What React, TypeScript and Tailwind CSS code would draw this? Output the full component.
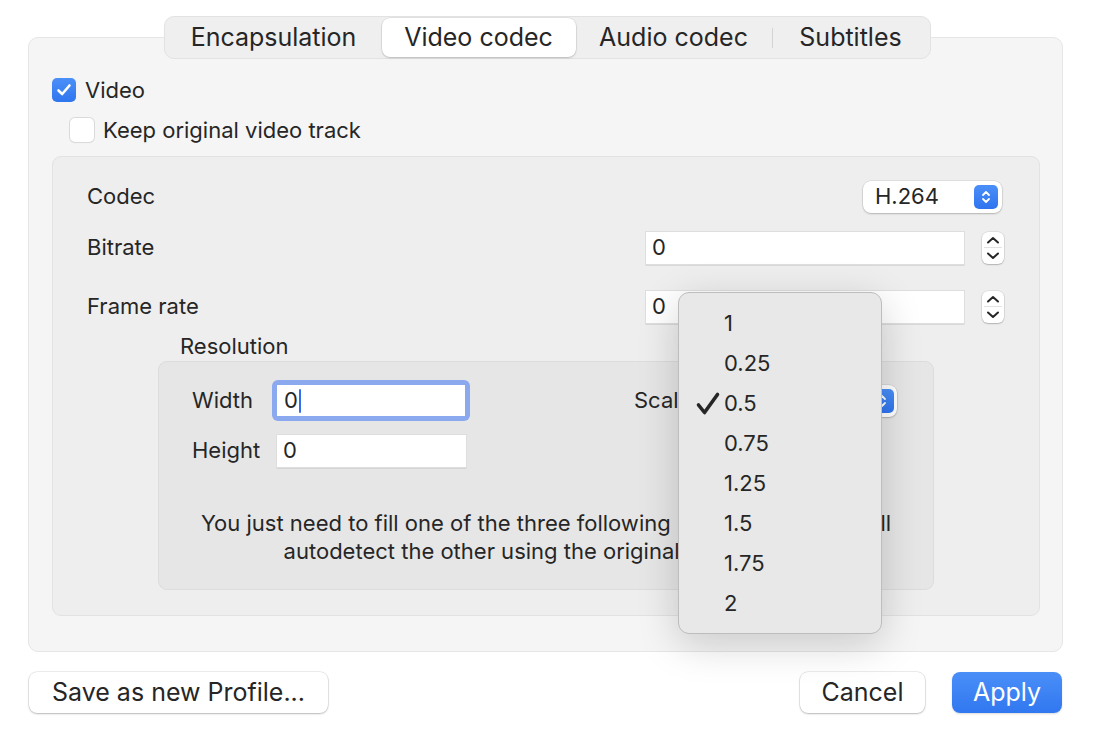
import React from "react";

const font = { fontFamily: "Inter, 'Noto Sans', sans-serif" };

function Stepper() {
  return (
    <div className="flex h-[32px] w-[22px] flex-col items-center justify-between rounded-[6px] bg-white shadow-[0_0_0_0.5px_rgba(0,0,0,0.12),0_1px_1.5px_rgba(0,0,0,0.2)]">
      <svg width="22" height="16" viewBox="0 0 22 16" className="shrink-0">
        <path d="M6 10.5 L11 6 L16 10.5" fill="none" stroke="#262626" strokeWidth="2" strokeLinecap="round" strokeLinejoin="round" />
        <line x1="2" y1="15.5" x2="20" y2="15.5" stroke="#e2e2e2" strokeWidth="1" />
      </svg>
      <svg width="22" height="16" viewBox="0 0 22 16" className="shrink-0">
        <path d="M6 5.5 L11 10 L16 5.5" fill="none" stroke="#262626" strokeWidth="2" strokeLinecap="round" strokeLinejoin="round" />
      </svg>
    </div>
  );
}

function BlueArrows({ className = "" }: { className?: string }) {
  return (
    <div className={"flex h-[24px] w-[24px] items-center justify-center rounded-[5px] bg-gradient-to-b from-[#4a8ff8] to-[#2f74ee] " + className}>
      <svg width="12" height="18" viewBox="0 0 12 18">
        <path d="M3 7 L6 4 L9 7" fill="none" stroke="#fff" strokeWidth="1.8" strokeLinecap="round" strokeLinejoin="round" />
        <path d="M3 11 L6 14 L9 11" fill="none" stroke="#fff" strokeWidth="1.8" strokeLinecap="round" strokeLinejoin="round" />
      </svg>
    </div>
  );
}

function TextField({ w, value }: { w: number; value: string }) {
  return (
    <div
      className="flex h-[32px] items-center bg-white pl-[6px] text-[22px] text-[#262626] shadow-[0_0_0_1px_#dedede,0_1px_0_0.5px_#c4c4c4]"
      style={{ width: w }}
    >
      {value}
    </div>
  );
}

export default function App() {
  const items = ["1", "0.25", "0.5", "0.75", "1.25", "1.5", "1.75", "2"];
  return (
    <div className="relative h-[746px] w-[1094px] overflow-hidden bg-white text-[#262626]" style={font}>
      <div className="pl-[28px] pr-[31px] pt-[16px]">
        {/* Tabs */}
        <div className="relative z-10 flex justify-center pl-[3px]">
          <div className="flex h-[43px] items-center rounded-[10px] border border-[#e2e2e2] bg-[#efefef] px-[1px] text-[25px]">
            <div className="flex h-[39px] w-[216px] items-center justify-center">Encapsulation</div>
            <div className="flex h-[39px] w-[194px] items-center justify-center rounded-[8px] bg-white shadow-[0_0_0_0.5px_rgba(0,0,0,0.1),0_1px_2px_rgba(0,0,0,0.18)]">
              Video codec
            </div>
            <div className="flex h-[39px] w-[196px] items-center justify-center">Audio codec</div>
            <div className="h-[20px] w-[1px] bg-[#d4d4d4]" />
            <div className="flex h-[39px] w-[156px] items-center justify-center">Subtitles</div>
          </div>
        </div>

        {/* Panel */}
        <div className="mt-[-22px] h-[615px] rounded-[10px] border border-[#e6e6e6] bg-[#f5f5f5] pl-[23px] pr-[22px] pt-[38px]">
          <div className="flex h-[28px] items-center gap-[9px] text-[22px]">
            <div className="flex h-[24px] w-[24px] items-center justify-center rounded-[5px] bg-gradient-to-b from-[#4b90f8] to-[#2f75ee]">
              <svg width="16" height="14" viewBox="0 0 16 14">
                <path d="M2.5 7.5 L6.2 11 L13.5 2.5" fill="none" stroke="#fff" strokeWidth="2.6" strokeLinecap="round" strokeLinejoin="round" />
              </svg>
            </div>
            <span>Video</span>
          </div>
          <div className="mt-[12px] flex h-[28px] items-center gap-[9px] pl-[18px] text-[22px]">
            <div className="h-[24px] w-[24px] rounded-[5px] bg-white shadow-[0_0_0_1px_#dadada,0_1px_1px_rgba(0,0,0,0.1)]" />
            <span>Keep original video track</span>
          </div>

          {/* Inner box */}
          <div className="mt-[12px] h-[460px] rounded-[9px] border border-[#e2e2e2] bg-[#eeeeee] pt-[23px] text-[22px]">
            <div className="flex items-center pl-[34px] pr-[37px]">
              <span className="flex-1">Codec</span>
              <div className="flex h-[32px] w-[139px] items-center justify-between rounded-[8px] bg-white pl-[12px] pr-[4px] shadow-[0_0_0_0.5px_rgba(0,0,0,0.12),0_1px_2px_rgba(0,0,0,0.2)]">
                <span>H.264</span>
                <BlueArrows />
              </div>
            </div>
            <div className="mt-[18px] flex items-center pl-[34px] pr-[35px]">
              <span className="flex-1">Bitrate</span>
              <TextField w={318} value="0" />
              <div className="ml-[18px]">
                <Stepper />
              </div>
            </div>
            <div className="mt-[26px] flex items-center pl-[34px] pr-[35px]">
              <span className="flex-1">Frame rate</span>
              <TextField w={318} value="0" />
              <div className="ml-[18px]">
                <Stepper />
              </div>
            </div>
            <div className="mt-[9px] h-[28px] pl-[127px] leading-[28px]">Resolution</div>

            {/* Resolution box */}
            <div className="mx-[105px] mt-[1px] h-[229px] rounded-[9px] border border-[#dcdcdc] bg-[#e6e6e6] pt-[18px]">
              <div className="flex items-center pl-[33px] pr-[36px]">
                <span className="w-[80px]">Width</span>
                <div className="rounded-[6px] bg-[#8ba9ee] p-[5px]">
                  <div className="flex h-[31px] w-[188px] items-center bg-white pl-[7px]">
                    <span>0</span>
                    <span className="ml-[1px] h-[24px] w-[2.5px] rounded-[1px] bg-[#2f6ff0]" />
                  </div>
                </div>
                <span className="ml-[164px] flex-1">Scale</span>
                <div className="flex h-[32px] w-[200px] items-center justify-end rounded-[8px] bg-white pr-[3px] shadow-[0_0_0_0.5px_rgba(0,0,0,0.12),0_1px_2px_rgba(0,0,0,0.2)]">
                  <BlueArrows />
                </div>
              </div>
              <div className="mt-[13px] flex items-center pl-[33px]">
                <span className="w-[85px]">Height</span>
                <TextField w={189} value="0" />
              </div>
              <div className="mt-[42px] text-center leading-[28px]">
                You just need to fill one of the three following parameters, VLC will
                <br />
                autodetect the other using the original aspect ratio
              </div>
            </div>
          </div>
        </div>

        {/* Bottom buttons */}
        <div className="mt-[20px] flex items-center text-[25px]">
          <div className="ml-[1px] flex h-[41px] w-[299px] items-center justify-center rounded-[8px] bg-white shadow-[0_0_0_0.5px_rgba(0,0,0,0.14),0_1px_2px_rgba(0,0,0,0.22)]">
            Save as new Profile...
          </div>
          <div className="flex-1" />
          <div className="flex h-[41px] w-[125px] items-center justify-center rounded-[8px] bg-white shadow-[0_0_0_0.5px_rgba(0,0,0,0.14),0_1px_2px_rgba(0,0,0,0.22)]">
            Cancel
          </div>
          <div className="ml-[27px] mr-[1px] flex h-[41px] w-[110px] items-center justify-center rounded-[8px] bg-gradient-to-b from-[#4a8ff8] to-[#3177f0] text-white shadow-[0_1px_2px_rgba(0,0,0,0.15)]">
            Apply
          </div>
        </div>
      </div>

      {/* Dropdown menu */}
      <div className="absolute left-[678px] top-[292px] z-20 w-[204px] rounded-[11px] border border-[#bdbdbd] bg-[#e7e8e7] py-[10px] text-[22px] shadow-[0_10px_40px_rgba(0,0,0,0.18)]">
        {items.map((it) => (
          <div key={it} className="relative flex h-[40px] items-center pl-[45px]">
            {it === "0.5" && (
              <svg className="absolute left-[16px] top-[8px]" width="26" height="26" viewBox="0 0 26 26">
                <path d="M3.5 14 L9.5 21.5 L22.5 3.5" fill="none" stroke="#262626" strokeWidth="3.6" strokeLinecap="round" strokeLinejoin="round" />
              </svg>
            )}
            {it}
          </div>
        ))}
      </div>
    </div>
  );
}
